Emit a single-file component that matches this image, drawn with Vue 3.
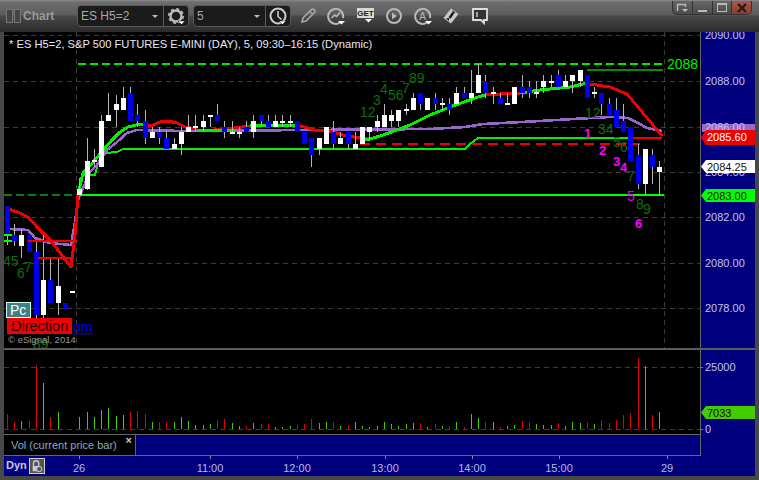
<script setup>
const X = i => Math.round(79.3 + 7.25 * i)

// index, wick top, wick bottom, body top, body bottom, colour
const raw = [
  [-10,206,245,206,235,'b'],[-9,224,246,235,241,'b'],[-8,229,258,235,246,'w'],[-7,235,252,235,252,'b'],
  [-6,240,332,252,315,'b'],[-5,235,332,280,315,'w'],[-4,258,303,280,303,'b'],[-3,258,315,286,303,'w'],
  [-2,303,309,303,309,'b'],[-1,291,293,291,293,'w'],
  [0,178,195,189,195,'w'],[1,138,190,161,189,'w'],[2,149,167,160,162,'w'],[3,115,167,121,167,'w'],
  [4,93,121,115,121,'w'],[5,95,127,104,110,'w'],[6,87,110,98,110,'w'],[7,87,121,93,121,'b'],
  [8,104,127,115,121,'b'],[9,110,144,121,138,'b'],[10,127,138,132,138,'w'],[11,127,144,132,138,'b'],
  [12,131,149,138,149,'b'],[13,138,149,144,149,'w'],[14,127,155,132,144,'w'],[15,115,132,127,132,'w'],
  [16,115,132,126,128,'w'],[17,115,132,121,127,'w'],[18,115,127,115,117,'w'],[19,104,121,115,121,'b'],
  [20,121,138,127,132,'b'],[21,121,133,132,134,'w'],[22,127,138,132,134,'w'],[23,121,132,127,132,'b'],
  [24,115,138,121,132,'w'],[25,115,127,115,121,'b'],[26,115,127,121,127,'b'],[27,115,127,121,127,'w'],
  [28,115,127,121,123,'w'],[29,115,127,121,123,'w'],[30,121,132,121,132,'b'],[31,132,144,132,144,'b'],
  [32,138,167,138,155,'b'],[33,138,155,138,149,'w'],[34,127,144,127,144,'w'],[35,121,149,132,144,'b'],
  [36,132,144,138,144,'w'],[37,132,149,132,144,'b'],[38,132,149,144,149,'w'],[39,127,144,127,144,'w'],
  [40,127,141,127,132,'w'],[41,115,132,121,127,'w'],[42,104,127,115,127,'w'],[43,110,127,115,121,'w'],
  [44,110,127,110,121,'w'],[45,104,115,109,111,'w'],[46,93,110,98,110,'w'],[47,93,110,93,104,'b'],
  [48,98,110,98,110,'w'],[49,93,110,98,104,'b'],[50,98,110,103,105,'w'],[51,98,115,104,110,'b'],
  [52,87,104,93,104,'w'],[53,87,98,93,98,'b'],[54,70,104,93,98,'w'],[55,64,93,75,93,'w'],
  [56,75,98,81,93,'b'],[57,87,104,92,94,'w'],[58,93,104,98,104,'b'],[59,93,105,103,105,'w'],
  [60,87,104,87,104,'w'],[61,75,98,87,93,'b'],[62,81,98,87,93,'b'],[63,81,98,92,94,'w'],
  [64,75,93,81,87,'w'],[65,75,87,81,83,'w'],[66,70,87,75,87,'b'],[67,75,87,81,87,'w'],
  [68,75,93,75,81,'w'],[69,70,87,70,81,'w'],[70,75,98,75,98,'b'],[71,87,98,92,94,'w'],
  [72,93,115,93,104,'b'],[73,98,115,104,115,'b'],[74,98,127,110,127,'b'],[75,104,132,121,132,'b'],
  [76,127,161,127,161,'b'],[77,144,189,155,184,'b'],[78,149,195,149,184,'w'],[79,149,184,155,167,'b'],
  [80,161,195,167,172,'w']
]
const candles = raw.map(([i, wt, wb, bt, bb, c]) => ({ i, x: X(i), wt, wb, bt, bb, c }))

const volData = {
  '-10': 'r15 r7 g8 r8 r64 g46 r12 g17',
  0: 'g12 g17 g12 g19 g21 g13 g14 r17 r18 r15 g7 r7 r7 g7 g12 g8 g4 g4 g5 r9 r10 g6 g3 r3',
  24: 'g6 r5 r5 g2 g2 g3 r4 r5 r10 g6 g7 r7 g3 r4 g7 g3 g2 g3 g7 g5 g3 g5 g6 r6 g2 r5 g3 r3 g7 r2 g15 g11 r7 g7 r2 g3',
  60: 'g4 r8 r7 g5 g4 g4 r6 g3 g7 g6 r7 g5 r9 r6 r9 r14 r16 r71 g63 r14 g17'
}
const vols = Object.entries(volData).flatMap(([start, s]) =>
  s.split(' ').map((t, k) => ({
    x: X(Number(start) + k),
    h: Number(t.slice(1)),
    c: t[0] === 'r' ? '#e00000' : '#44cc00'
  }))
)

const redA = '9,209 20,213 28,217 37,227 50,240 58,250 71,267 75,235 78,195 80,190'
const redB = '147,126 153,125 160,122 168,121 177,123 185,127 197,129'
const redC = '214,130 227,129 250,126'
const redD = '297,125 315,130 333,132 343,135 360,138 370,139'
const redE = '485,95 500,94 520,93'
const redF = '587,84 590,84 610,87 627,94 638,107 662,136'
const greenMain = '79,190 83,173 95,160 105,148 112,140 120,132 128,127 140,124 147,124'
const greenB = '197,130 214,131 235,130'
const greenC = '250,125 297,125'
const greenD = '360,139 370,139 383,135 397,130 410,125 430,115 450,107 478,97 485,95'
const greenE = '520,93 540,90 570,87 587,83'
const limeMA = '83,175 95,175 98,163 105,153 117,152 123,149 465,149 470,144 478,138 628,138'
const purple = '9,229 28,230 35,238 50,243 71,245 75,222 78,200 90,172 97,165 107,150 117,142 127,133 137,130 183,131 430,129 465,127 483,124 503,123 540,121 573,119 610,117 628,118 638,123 647,128 662,131'

const grid = [35, 81, 127, 172, 217, 263, 308]
const priceLabels = [
  ['2090.00', 39], ['2088.00', 85], ['2086.00', 131], ['2084.00', 176],
  ['2082.00', 221], ['2080.00', 267], ['2078.00', 312]
]
const greens = [
  ['12',360,117],['3',373,105],['4',380,94],['56',388,100],['7',402,93],['89',409,83],
  ['12',585,118],['34',598,134],['5',613,147],['6',620,152],['7',627,181],['8',636,209],['9',643,214],
  ['45',3,266],['6',17,278],['7',24,272],['89',33,349]
]
const magentas = [['1',584,138],['2',599,155],['3',613,166],['4',620,172],['6',635,228]]
const times = [['26',79],['11:00',210],['12:00',297],['13:00',385],['14:00',472],['15:00',559],['29',667]]
</script>

<template>
  <div class="window">
    <header class="titlebar">
      <div class="grip"><i></i><i></i></div>
      <span class="title">Chart</span>
      <div class="combo sym">
        <span class="combo-text">ES H5=2</span><b class="caret"></b>
        <span class="combo-icon">
          <svg width="20" height="20" viewBox="0 0 20 20">
            <circle cx="10" cy="10" r="5.500" fill="none" stroke="#bbb" stroke-width="2.400"/>
            <circle cx="10" cy="10" r="7.200" fill="none" stroke="#bbb" stroke-width="1.600" stroke-dasharray="3 2.650"/>
            <path d="M12 15h7l-3.500 3.500z" fill="#fff" stroke="#1a1a1a" stroke-width=".5"/>
          </svg>
        </span>
      </div>
      <div class="combo intv">
        <span class="combo-text">5</span><b class="caret"></b>
        <span class="combo-icon">
          <svg width="20" height="20" viewBox="0 0 20 20">
            <circle cx="10" cy="10" r="7.500" fill="none" stroke="#ccc" stroke-width="2"/>
            <path d="M10 5v5.500l3.500 3" fill="none" stroke="#ccc" stroke-width="1.600"/>
            <path d="M11 15h7l-3.500 3.500z" fill="#fff" stroke="#1a1a1a" stroke-width=".5"/>
          </svg>
        </span>
      </div>
      <div class="tools">
        <svg width="18" height="18" viewBox="0 0 18 18" class="t-pencil">
          <path d="M3 15l1-4L12.500 2.500a1.800 1.800 0 0 1 2.600 0l.4.4a1.800 1.800 0 0 1 0 2.600L7 14z" fill="none" stroke="#a8a8a8" stroke-width="1.600"/>
          <path d="M11 4.500l2.500 2.500" stroke="#a8a8a8" stroke-width="1.200"/>
        </svg>
        <svg width="20" height="20" viewBox="0 0 20 20" class="t-chart">
          <path d="M14 16.500A7.500 7.500 0 1 1 17 12" fill="none" stroke="#b8b8b8" stroke-width="2"/>
          <path d="M5.500 12l3-3 2 1.500L14 6.500" fill="none" stroke="#b8b8b8" stroke-width="1.600"/>
          <path d="M12 15h7l-3.500 3.500z" fill="#fff"/>
        </svg>
        <svg width="20" height="20" viewBox="0 0 20 20" class="t-get">
          <path d="M1 2h17v10H1z" fill="#d8d8d8"/>
          <text x="9.500" y="10" class="get-text">GET</text>
          <path d="M9 13h7l-3.500 3.500z" fill="#fff"/>
        </svg>
        <svg width="18" height="18" viewBox="0 0 18 18" class="t-play">
          <circle cx="9" cy="9" r="7" fill="none" stroke="#b8b8b8" stroke-width="2"/>
          <path d="M7 5.500l5 3.500-5 3.500z" fill="#b8b8b8"/>
        </svg>
        <svg width="20" height="20" viewBox="0 0 20 20" class="t-auto">
          <path d="M14 16.500A7.500 7.500 0 1 1 17 12" fill="none" stroke="#b8b8b8" stroke-width="2"/>
          <text x="9.500" y="13.500" class="auto-text">A</text>
          <path d="M12 15h7l-3.500 3.500z" fill="#fff"/>
        </svg>
        <svg width="18" height="18" viewBox="0 0 18 18" class="t-move">
          <path d="M9 1.500l7.500 5.500-7.500 9.500L1.500 11z" fill="#c8c8c8"/>
          <path d="M10.500 3.500l3 2.500-3 .5zM7 14l-3-2.500 3-.5z" fill="#111"/>
          <path d="M7.500 11l3.500-5" stroke="#111" stroke-width="2.200"/>
        </svg>
        <svg width="18" height="18" viewBox="0 0 18 18" class="t-note">
          <path d="M2 2h14v11h-3v3l-3-3H2z" fill="#333" stroke="#ddd" stroke-width="1.800"/>
          <path d="M6 5v5" stroke="#ddd" stroke-width="1.300"/>
        </svg>
      </div>
      <div class="winbtns">
        <span class="wb">
          <svg width="14" height="10" viewBox="0 0 14 10">
            <path d="M2.500 8V1.500h8V4" fill="none" stroke="#bbb" stroke-width="1.400"/>
            <path d="M7 6h6L10 9z" fill="#bbb"/>
          </svg>
        </span>
        <span class="wb"><i class="min"></i></span>
        <span class="wb"><i class="max"></i></span>
        <span class="wb close">
          <svg width="14" height="10" viewBox="0 0 14 10">
            <path d="M3 1l8 8M11 1L3 9" stroke="#2a1a1a" stroke-width="2.400"/>
          </svg>
        </span>
      </div>
    </header>

    <section class="row main-row">
      <svg class="pane" width="696" height="316" viewBox="4 32 696 316" shape-rendering="crispEdges">
        <rect x="4" y="32" width="696" height="316" fill="#000"/>
        <line v-for="y in grid" :key="y" x1="4" x2="700" :y1="y" :y2="y" class="grid"/>
        <line x1="76" x2="76" y1="32" y2="348" class="grid"/>
        <line x1="664.500" x2="664.500" y1="32" y2="348" class="grid"/>

        <line x1="78" x2="663" y1="64" y2="64" class="dash-lime"/>
        <line x1="587" x2="663" y1="70" y2="70" class="dark-green"/>
        <line x1="4" x2="76" y1="195" y2="195" class="dash-dark"/>
        <line x1="78" x2="664" y1="195" y2="195" class="solid-lime"/>
        <line x1="360" x2="640" y1="144" y2="144" class="dash-red"/>

        <polyline :points="limeMA" class="ln lime flat"/>
        <polyline :points="purple" class="ln purple"/>
        <polyline :points="redA" class="ln red"/>
        <polyline :points="redB" class="ln red"/>
        <polyline :points="redC" class="ln red"/>
        <polyline :points="redD" class="ln red"/>
        <polyline :points="redE" class="ln red"/>
        <polyline :points="redF" class="ln red"/>
        <polyline :points="greenMain" class="ln lime"/>
        <polyline :points="greenB" class="ln lime"/>
        <polyline :points="greenC" class="ln lime"/>
        <polyline :points="greenD" class="ln lime"/>
        <polyline :points="greenE" class="ln lime"/>
        <line x1="628" x2="662" y1="138" y2="138" class="red-flat"/>

        <g v-for="c in candles" :key="c.i">
          <rect :x="c.x" :y="c.wt" width="1" :height="c.wb - c.wt" fill="#b4b4b4"/>
          <rect :x="c.x - 2" :y="c.bt" width="5" :height="Math.max(c.bb - c.bt, 2)" :fill="c.c === 'w' ? '#fff' : '#0000ee'"/>
        </g>

        <line x1="28" x2="77" y1="241" y2="241" class="red-flat"/>
        <line x1="38" x2="72" y1="258" y2="258" class="red-flat"/>
        <line x1="4" x2="12" y1="241" y2="241" class="solid-lime"/>
        <line x1="4" x2="12" y1="235" y2="235" class="solid-lime"/>

        <text v-for="(g, k) in greens" :key="k" :x="g[1]" :y="g[2]" class="tg">{{ g[0] }}</text>
        <text v-for="(m, k) in magentas" :key="k" :x="m[1]" :y="m[2]" class="tm">{{ m[0] }}</text>
        <text x="627" y="201" class="tm5">5</text>

        <text x="667" y="69" class="t2088">2088</text>
        <text x="9" y="48" class="chart-title">* ES H5=2, S&amp;P 500 FUTURES E-MINI (DAY), 5, 09:30–16:15 (Dynamic)</text>

        <rect x="6.500" y="302.500" width="24" height="15" fill="#3f8084" stroke="#cfe" stroke-width="1"/>
        <text x="10" y="315" class="pc">Pc</text>
        <rect x="7" y="318" width="65" height="16" fill="#f00000"/>
        <text x="11" y="331" class="direction">Direction</text>
        <text x="73" y="332" class="om">om</text>
        <text x="8" y="343" class="esig">© eSignal, 2014</text>
      </svg>
      <svg class="axis" width="55" height="316" viewBox="700 32 55 316" shape-rendering="crispEdges">
        <rect x="700" y="32" width="55" height="316" fill="#00007f"/>
        <line x1="700.500" x2="700.500" y1="32" y2="348" stroke="#666"/>
        <rect x="702" y="124" width="53" height="8" fill="#9966cc"/>
        <text v-for="p in priceLabels" :key="p[0]" x="705" :y="p[1]" class="tick-label">{{ p[0] }}</text>
        <polygon points="701,137.500 706,130 755,130 755,145 706,145" fill="#f00000" shape-rendering="auto"/>
        <text x="707" y="141" class="tag white">2085.60</text>
        <polygon points="701,166.500 706,160 755,160 755,173 706,173" fill="#fff" shape-rendering="auto"/>
        <text x="707" y="171" class="tag black">2084.25</text>
        <polygon points="701,195.500 706,189 755,189 755,202 706,202" fill="#00ff00" shape-rendering="auto"/>
        <text x="707" y="200" class="tag black">2083.00</text>
      </svg>
    </section>

    <section class="row vol-row">
      <div class="vol-col">
        <svg class="pane" width="696" height="84" viewBox="4 350 696 84" shape-rendering="crispEdges">
          <rect x="4" y="350" width="696" height="84" fill="#000"/>
          <line x1="4" x2="700" y1="367" y2="367" class="grid"/>
          <line x1="4" x2="700" y1="429" y2="429" class="grid"/>
          <rect v-for="(v, k) in vols" :key="k" :x="v.x" :y="429 - v.h" width="1" :height="v.h" :fill="v.c"/>
        </svg>
        <div class="legend">
          <div class="legend-box">
            <span>Vol (current price bar)</span>
            <b class="legend-x">×</b>
          </div>
        </div>
      </div>
      <svg class="axis" width="55" height="106" viewBox="700 350 55 106" shape-rendering="crispEdges">
        <rect x="700" y="350" width="55" height="106" fill="#00007f"/>
        <line x1="700.500" x2="700.500" y1="350" y2="456" stroke="#666"/>
        <line x1="700" x2="703" y1="367.500" y2="367.500" stroke="#777"/>
        <line x1="700" x2="703" y1="429.500" y2="429.500" stroke="#777"/>
        <text x="705" y="371" class="tick-label">25000</text>
        <text x="705" y="433" class="tick-label">0</text>
        <polygon points="701,412.500 706,406 755,406 755,419 706,419" fill="#44cc00" shape-rendering="auto"/>
        <text x="707" y="417" class="tag black">7033</text>
      </svg>
    </section>

    <footer class="timebar">
      <span class="dyn">Dyn</span>
      <span class="lock">
        <svg width="16" height="16" viewBox="0 0 16 16">
          <path d="M4 8V5a3 3 0 0 1 6 0v3" fill="none" stroke="#ccc" stroke-width="1.500"/>
          <path d="M3 8h8v6H3z" fill="#ccc"/>
          <circle cx="10.500" cy="11.500" r="3" fill="#555" stroke="#ddd"/>
        </svg>
      </span>
      <svg class="times" width="696" height="20" viewBox="4 456 696 20" shape-rendering="crispEdges">
        <template v-for="t in times" :key="t[0]">
          <line :x1="t[1] + .5" :x2="t[1] + .5" y1="456" y2="459" stroke="#888"/>
          <text :x="t[1]" y="472" class="time-label">{{ t[0] }}</text>
        </template>
      </svg>
    </footer>
  </div>
</template>

<style scoped>
.window {
  position: relative;
  width: 759px;
  height: 480px;
  box-sizing: border-box;
  padding: 0 4px 4px;
  background: #484848;
  font-family: "Liberation Sans", Arial, sans-serif;
  overflow: hidden;
  display: flex;
  flex-direction: column;
}
svg { display: block; flex: none; }
.titlebar {
  height: 32px;
  flex: none;
  margin: 0 -4px;
  padding-left: 6px;
  display: flex;
  align-items: center;
  position: relative;
  background: linear-gradient(#8c8c8c 0, #6e6e6e 2px, #5c5c5c 15px, #484848 16px, #2b2b2b 32px);
}
.grip { display: flex; gap: 1px; }
.grip i {
  display: block;
  width: 5px;
  height: 12px;
  border: 1px solid #777;
  background: #444;
}
.title {
  margin-left: 2px;
  width: 54px;
  flex: none;
  font-size: 12px;
  font-weight: bold;
  color: #9a9a9a;
}
.combo {
  height: 22px;
  box-sizing: border-box;
  display: flex;
  align-items: center;
  background: #1b1b1b;
  border: 1px solid #5a5a5a;
  border-radius: 4px;
  position: relative;
  flex: none;
}
.sym { width: 112px; margin-right: 4px; }
.intv { width: 98px; }
.combo-text {
  flex: 1;
  padding-left: 3px;
  font-size: 12px;
  color: #a8a8a8;
}
.caret {
  width: 0;
  height: 0;
  margin-right: 5px;
  border: 3px solid transparent;
  border-top: 3px solid #bbb;
  border-bottom: 0;
}
.combo-icon {
  width: 25px;
  height: 20px;
  box-sizing: border-box;
  border-left: 1px solid #5a5a5a;
  display: flex;
  justify-content: center;
}
.tools {
  display: flex;
  align-items: center;
  margin-left: 8px;
}
.t-chart { margin-left: 9px; }
.t-get { margin-left: 10px; }
.t-play { margin-left: 9px; }
.t-auto { margin-left: 10px; }
.t-move { margin-left: 9px; }
.t-note { margin-left: 11px; }
.get-text {
  font-size: 8px;
  font-weight: bold;
  text-anchor: middle;
  fill: #222;
}
.auto-text {
  font-size: 10px;
  text-anchor: middle;
  fill: #b8b8b8;
}
.winbtns {
  position: absolute;
  left: 672px;
  top: 1px;
  width: 80px;
  height: 14px;
  display: flex;
  box-sizing: border-box;
  border: 1px solid #333;
  border-top: 0;
  border-radius: 0 0 5px 5px;
  overflow: hidden;
  background: linear-gradient(#666, #4b4b4b);
}
.wb {
  flex: 1;
  border-left: 1px solid #333;
  display: flex;
  align-items: center;
  justify-content: center;
}
.wb:first-child { border-left: 0; }
.wb .min { width: 9px; height: 2px; margin-top: 6px; background: #bbb; }
.wb .max { width: 8px; height: 6px; border: 1px solid #bbb; border-top-width: 2px; }
.close { background: linear-gradient(#a8584a, #8a3d32); }

.row { display: flex; flex: none; }
.main-row { height: 316px; }
.vol-row {
  height: 108px;
  border-top: 2px solid #5c5c5c;
  box-sizing: border-box;
}
.vol-col { width: 696px; flex: none; }
.legend {
  height: 22px;
  box-sizing: border-box;
  background: #00007f;
  border-top: 1px solid #666;
  border-bottom: 1px solid #666;
}
.legend-box {
  width: 132px;
  height: 20px;
  background: #000;
  border-right: 1px solid #666;
  display: flex;
  align-items: center;
  color: #8fa8c4;
  font-size: 11px;
  padding-left: 7px;
  box-sizing: border-box;
  position: relative;
}
.legend-x {
  position: absolute;
  right: 3px;
  top: -1px;
  font-size: 11px;
  color: #ccc;
}
.timebar {
  position: relative;
  height: 20px;
  flex: none;
  background: #00007f;
}
.dyn {
  position: absolute;
  left: 2px;
  top: 3px;
  font-size: 11px;
  font-weight: bold;
  color: #c8c8e8;
}
.lock {
  position: absolute;
  left: 25px;
  top: 2px;
  width: 16px;
  height: 16px;
  box-sizing: border-box;
  background: #555;
  border: 1px solid #ccc;
}
.lock svg { width: 14px; height: 14px; }
.times { position: absolute; left: 0; top: 0; }
.time-label {
  font-size: 11px;
  text-anchor: middle;
  fill: #b8b8e4;
}

.grid { stroke: #3c3c3c; stroke-dasharray: 5 4; stroke-width: 1; }
.dash-lime { stroke: #00ee00; stroke-width: 2; stroke-dasharray: 8 4; }
.dark-green { stroke: #0a8a0a; stroke-width: 2; }
.dash-dark { stroke: #0a7a0a; stroke-width: 2; stroke-dasharray: 8 4; }
.solid-lime { stroke: #00ff00; stroke-width: 2; }
.dash-red { stroke: #ee0000; stroke-width: 2; stroke-dasharray: 10 6; }
.red-flat { stroke: #f00000; stroke-width: 2; }
.ln { fill: none; stroke-width: 3; stroke-linejoin: round; }
.flat { stroke-width: 2; }
.lime { stroke: #00f000; }
.red { stroke: #f00000; }
.purple { stroke: #9966cc; stroke-width: 2.600; }

.tg { font-size: 14px; fill: #0b700b; }
.tm { font-size: 13px; font-weight: bold; fill: #ff00ff; }
.tm5 { font-size: 14px; fill: #ee00ee; }
.t2088 { font-size: 14px; fill: #00ee00; }
.chart-title { font-size: 11.170px; fill: #e8e8f4; }
.pc { font-size: 14px; fill: #fff; }
.direction { font-size: 14.500px; fill: #240000; }
.om { font-size: 14px; fill: #0000ee; text-decoration: underline; }
.esig { font-size: 9.500px; fill: #999; }
.tick-label { font-size: 11px; fill: #c4c4e4; }
.tag { font-size: 11px; }
.white { fill: #fff; }
.black { fill: #111; }
</style>

<style>
html, body { margin: 0; background: #484848; }
</style>
